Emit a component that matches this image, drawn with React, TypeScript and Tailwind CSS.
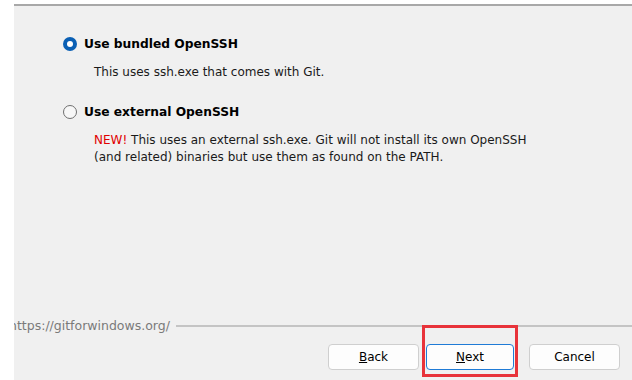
import React from 'react';

const font = { fontFamily: '"DejaVu Sans", Verdana, sans-serif' };

const Radio = ({ checked }: { checked?: boolean }) =>
  checked ? (
    <span className="w-[14px] h-[14px] rounded-full bg-[#0a5fb4] flex items-center justify-center shrink-0">
      <span className="w-[6px] h-[6px] rounded-full bg-white" />
    </span>
  ) : (
    <span className="w-[14px] h-[14px] rounded-full border border-[#6f6f6f] bg-[#f7f7f7] shrink-0" />
  );

const Option = ({
  checked,
  label,
  children,
}: {
  checked?: boolean;
  label: string;
  children: React.ReactNode;
}) => (
  <div>
    <div className="flex items-center gap-[7px] h-[16px]">
      <Radio checked={checked} />
      <span className="text-[12.25px] font-bold text-black leading-none">{label}</span>
    </div>
    <div className="pl-[31px] mt-[12px] text-[12px] leading-[17px] text-[#1a1a1a]">{children}</div>
  </div>
);

const Btn = ({ children, active }: { children: React.ReactNode; active?: boolean }) => (
  <button
    className={`h-[26px] rounded-[4px] bg-[#fdfdfd] text-[12px] text-black ${
      active ? 'border border-[#1f7bd6] w-[88px]' : 'border border-[#cfcfcf] w-[91px]'
    }`}
  >
    {children}
  </button>
);

export default function App() {
  return (
    <div className="w-[632px] h-[380px] bg-white flex overflow-hidden" style={font}>
      <div className="w-[14px] shrink-0" />
      <div className="flex-1 flex flex-col pt-[4px]">
        <div className="h-[2px] bg-[#a8a8a8]" />
        <div className="flex-1 bg-[#f0f0f0] flex flex-col overflow-hidden">
          <div className="pl-[49px] pt-[30px] flex flex-col gap-[23px]">
            <Option checked label="Use bundled OpenSSH">
              This uses ssh.exe that comes with Git.
            </Option>
            <Option label="Use external OpenSSH">
              <span className="text-[#e00000]">NEW!</span> This uses an external ssh.exe. Git will not install its own OpenSSH
              <br />
              (and related) binaries but use them as found on the PATH.
            </Option>
          </div>
          <div className="flex-1" />
          <div className="flex items-center gap-[6px] h-[14px]">
            <span className="text-[12.5px] text-[#7a7a7a] whitespace-nowrap -ml-[5px]">https://gitforwindows.org/</span>
            <div className="flex-1 h-[2px] bg-[#c4c4c4]" />
          </div>
          <div className="flex items-center pl-[314px] pt-[11px] pb-[10px]">
            <Btn>
              <span className="underline">B</span>ack
            </Btn>
            <div className="relative ml-[7px]">
              <Btn active>
                <span className="underline">N</span>ext
              </Btn>
              <div className="absolute -left-[4px] -top-[19px] w-[96px] h-[52px] border-[3px] border-[#e8333a] pointer-events-none" />
            </div>
            <div className="ml-[15px]">
              <Btn>Cancel</Btn>
            </div>
          </div>
        </div>
      </div>
    </div>
  );
}
